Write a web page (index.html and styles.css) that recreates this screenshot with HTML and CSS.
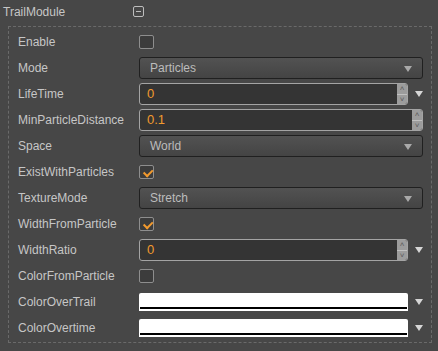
FILE: index.html
```html
<!DOCTYPE html>
<html lang="en">

<head>
    <meta charset="UTF-8">
    <title>TrailModule</title>
    <link rel="stylesheet" href="styles.css">
</head>

<body>
    <div class="module-head">
        <span class="module-title">TrailModule</span>
        <span class="collapse-btn"></span>
    </div>

    <div class="module-box">
        <div class="row">
            <label>Enable</label>
            <div class="ctrl"><span class="check"></span></div>
        </div>
        <div class="row">
            <label>Mode</label>
            <div class="ctrl"><div class="select">Particles<span class="caret"></span></div></div>
        </div>
        <div class="row">
            <label>LifeTime</label>
            <div class="ctrl">
                <div class="num short"><span class="val">0</span><span class="spin"><i>&#708;</i><i>&#709;</i></span></div>
                <span class="more"></span>
            </div>
        </div>
        <div class="row">
            <label>MinParticleDistance</label>
            <div class="ctrl">
                <div class="num"><span class="val">0.1</span><span class="spin"><i>&#708;</i><i>&#709;</i></span></div>
            </div>
        </div>
        <div class="row">
            <label>Space</label>
            <div class="ctrl"><div class="select">World<span class="caret"></span></div></div>
        </div>
        <div class="row">
            <label>ExistWithParticles</label>
            <div class="ctrl"><span class="check on"></span></div>
        </div>
        <div class="row">
            <label>TextureMode</label>
            <div class="ctrl"><div class="select">Stretch<span class="caret"></span></div></div>
        </div>
        <div class="row">
            <label>WidthFromParticle</label>
            <div class="ctrl"><span class="check on"></span></div>
        </div>
        <div class="row">
            <label>WidthRatio</label>
            <div class="ctrl">
                <div class="num short"><span class="val">0</span><span class="spin"><i>&#708;</i><i>&#709;</i></span></div>
                <span class="more"></span>
            </div>
        </div>
        <div class="row">
            <label>ColorFromParticle</label>
            <div class="ctrl"><span class="check"></span></div>
        </div>
        <div class="row">
            <label>ColorOverTrail</label>
            <div class="ctrl"><div class="color"></div><span class="more"></span></div>
        </div>
        <div class="row">
            <label>ColorOvertime</label>
            <div class="ctrl"><div class="color"></div><span class="more"></span></div>
        </div>
    </div>
</body>

</html>
```

FILE: styles.css
```css
* {
    margin: 0;
    padding: 0;
    box-sizing: border-box;
    font-family: "Liberation Sans", Arial, sans-serif;
}

body {
    background-color: #474747;
    color: #c6c6c6;
    font-size: 12px;
    width: 438px;
    height: 351px;
    overflow: hidden;
}

.module-head {
    display: flex;
    align-items: center;
    height: 23px;
    padding-left: 3px;
}

.module-title {
    width: 130px;
}

.collapse-btn {
    width: 11px;
    height: 11px;
    border: 1px solid #bdbdbd;
    border-radius: 2px;
    position: relative;
}

.collapse-btn::after {
    content: "";
    position: absolute;
    left: 2px;
    right: 2px;
    top: 4px;
    height: 1px;
    background: #bdbdbd;
}

.module-box {
    margin: 3px 0 0 8px;
    width: 424px;
    border: 1px dashed #6a6a6a;
    padding: 2px 8px 1px 9px;
}

.row {
    display: grid;
    grid-template-columns: 121px 1fr;
    align-items: center;
    height: 26px;
}

.ctrl {
    display: flex;
    align-items: center;
}

.check {
    width: 15px;
    height: 14px;
    border: 1px solid #8e8e8e;
    border-radius: 2px;
    background: #3c3c3c;
    position: relative;
}

.check.on::after {
    content: "";
    position: absolute;
    left: 3px;
    top: 1px;
    width: 7px;
    height: 4px;
    border-left: 2px solid #f29a2e;
    border-bottom: 2px solid #f29a2e;
    transform: rotate(-45deg) translate(-1px, 2px);
}

.select {
    flex: 1;
    height: 22px;
    border: 1px solid #202020;
    border-radius: 3px;
    background: linear-gradient(#525252, #444444);
    color: #bcbcbc;
    padding-left: 10px;
    display: flex;
    align-items: center;
    position: relative;
}

.caret {
    position: absolute;
    right: 10px;
    top: 8px;
    border-left: 4px solid transparent;
    border-right: 4px solid transparent;
    border-top: 6px solid #a9a9a9;
}

.num {
    flex: 1;
    height: 22px;
    border: 1px solid #a4a4a4;
    border-radius: 3px;
    background: #343434;
    display: flex;
    overflow: hidden;
}

.num .val {
    flex: 1;
    color: #f29a2e;
    padding-left: 7px;
    line-height: 20px;
    font-size: 13px;
}

.spin {
    width: 10px;
    background: #9c9c9c;
    display: flex;
    flex-direction: column;
}

.spin i {
    flex: 1;
    font-style: normal;
    font-size: 8px;
    line-height: 10px;
    text-align: center;
    color: #5a5a5a;
}

.spin i:first-child {
    border-bottom: 1px solid #c0c0c0;
}

.more {
    width: 15px;
    display: flex;
    justify-content: flex-end;
}

.more::after {
    content: "";
    border-left: 4px solid transparent;
    border-right: 4px solid transparent;
    border-top: 6px solid #d6d6d6;
}

.color {
    flex: 1;
    height: 18px;
    background: #ffffff;
    border-radius: 2px 2px 0 0;
    border-bottom: 2px solid #ffffff;
    position: relative;
}

.color::after {
    content: "";
    position: absolute;
    left: 1px;
    right: 1px;
    bottom: 0;
    height: 2px;
    background: #000000;
}
```
